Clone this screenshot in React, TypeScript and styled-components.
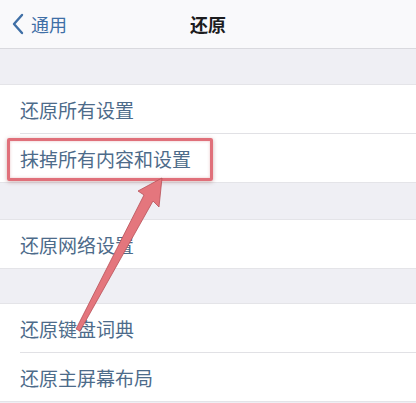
import styled, { createGlobalStyle } from 'styled-components';

const GlobalStyle = createGlobalStyle`
    html, body {
        margin: 0;
        padding: 0;
        background: #efeff4;
    }
    body {
        font-family: "Noto Sans CJK SC", "Noto Sans", sans-serif;
    }
`;

const groups = [
    ['还原所有设置', '抹掉所有内容和设置'],
    ['还原网络设置'],
    ['还原键盘词典', '还原主屏幕布局']
];

const Page = styled.div`
    position: relative;
    width: 416px;
    height: 403px;
    overflow: hidden;
    background: #efeff4;
`;

const NavBar = styled.header`
    height: 48px;
    display: grid;
    grid-template-columns: 1fr auto 1fr;
    align-items: center;
    background: #f9f9fb;
    border-bottom: 1px solid #d9d9de;
`;

const Back = styled.div`
    display: flex;
    align-items: center;
    gap: 6px;
    padding-left: 11px;
    color: #3f6fa6;
    font-size: 18px;
`;

const Title = styled.h1`
    margin: 0;
    font-size: 18px;
    font-weight: 700;
    color: #1c1c1e;
`;

const Spacer = styled.div<{ $h: number }>`
    height: ${(p) => p.$h}px;
`;

const Group = styled.section`
    background: #fff;
    padding-left: 20px;
    border-top: 1px solid #e4e4e8;
    border-bottom: 1px solid #e4e4e8;
`;

const Row = styled.div`
    height: 48px;
    display: flex;
    align-items: center;
    font-size: 19px;
    color: #4d6b8a;
    & + & {
        border-top: 1px solid #e1e1e5;
    }
`;

const Highlight = styled.div`
    position: absolute;
    left: 7px;
    top: 138px;
    width: 200px;
    height: 37px;
    border: 3px solid #e0707a;
    border-radius: 2px;
    box-shadow: 0 1px 4px rgba(120, 40, 40, 0.35),
        inset 0 0 3px rgba(180, 60, 70, 0.3);
`;

const Arrow = styled.svg`
    position: absolute;
    left: 0;
    top: 0;
    pointer-events: none;
`;

const App = () => (
    <Page>
        <GlobalStyle />
        <NavBar>
            <Back>
                <svg width="14" height="22" viewBox="0 0 14 22">
                    <path
                        d="M11 2 L3 11 L11 20"
                        fill="none"
                        stroke="#3f6fa6"
                        strokeWidth="2.4"
                        strokeLinecap="round"
                        strokeLinejoin="round"
                    />
                </svg>
                通用
            </Back>
            <Title>还原</Title>
            <div />
        </NavBar>
        <Spacer $h={35} />
        <Group>
            {groups[0].map((t) => (
                <Row key={t}>{t}</Row>
            ))}
        </Group>
        <Spacer $h={36} />
        <Group>
            {groups[1].map((t) => (
                <Row key={t}>{t}</Row>
            ))}
        </Group>
        <Spacer $h={34} />
        <Group>
            {groups[2].map((t) => (
                <Row key={t}>{t}</Row>
            ))}
        </Group>
        <Highlight />
        <Arrow width="416" height="403" viewBox="0 0 416 403">
            <path
                d="M162 178 L159 207 L153 201 L80 331 L76 329 L144 195 L138 191 Z"
                fill="#e4767d"
                stroke="#b85058"
                strokeWidth="0.8"
                strokeLinejoin="round"
            />
        </Arrow>
    </Page>
);

export default App;
